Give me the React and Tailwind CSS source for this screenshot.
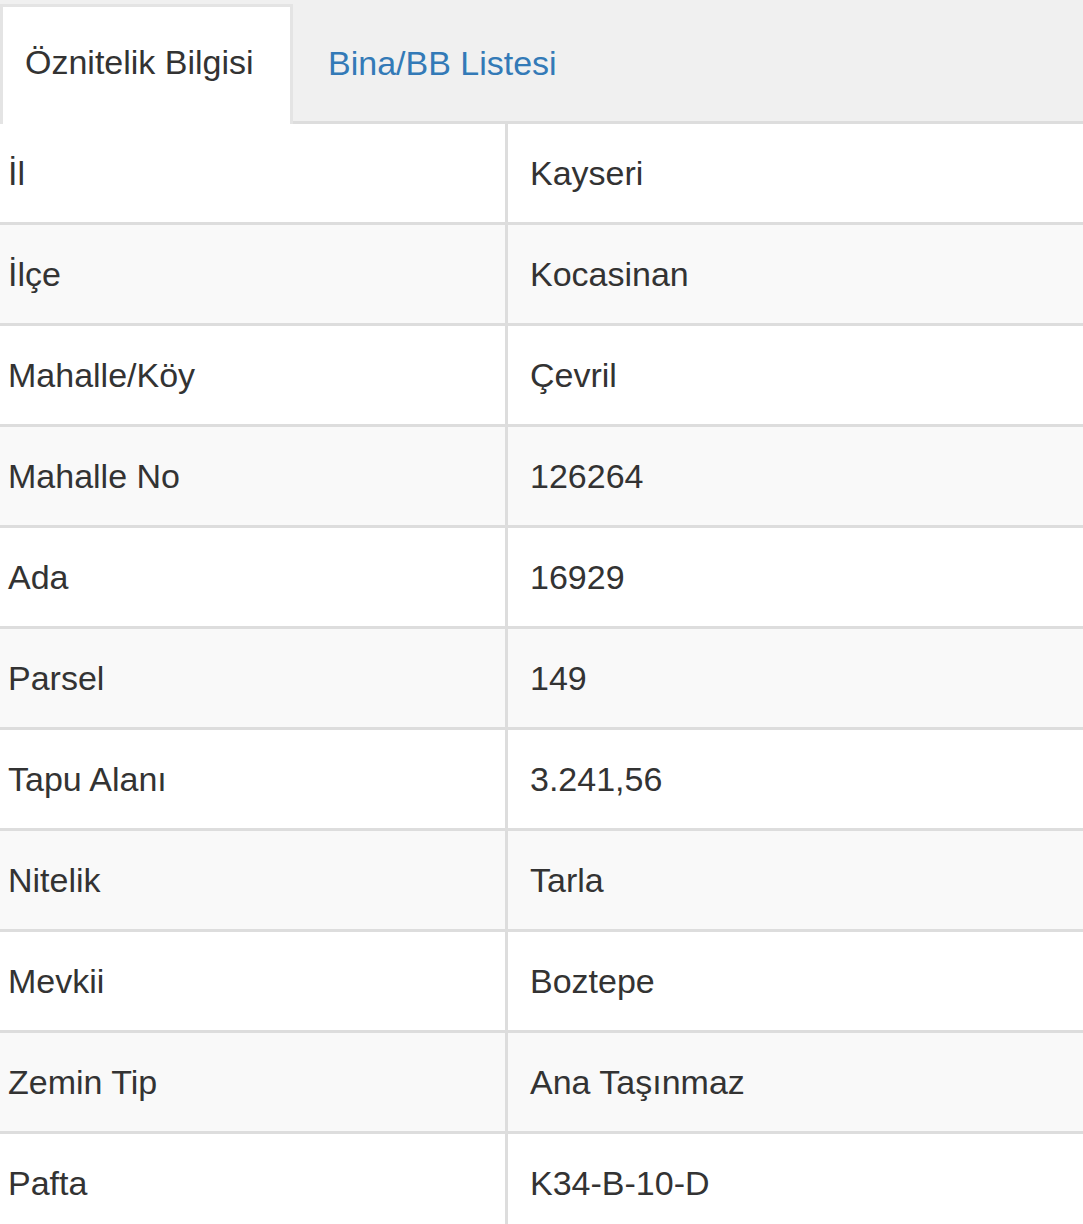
import React from "react";

const rows = [
  ["İl", "Kayseri"],
  ["İlçe", "Kocasinan"],
  ["Mahalle/Köy", "Çevril"],
  ["Mahalle No", "126264"],
  ["Ada", "16929"],
  ["Parsel", "149"],
  ["Tapu Alanı", "3.241,56"],
  ["Nitelik", "Tarla"],
  ["Mevkii", "Boztepe"],
  ["Zemin Tip", "Ana Taşınmaz"],
  ["Pafta", "K34-B-10-D"],
];

export default function App() {
  return (
    <div
      className="w-[1083px] h-[1224px] overflow-hidden bg-white text-[#333] text-[34px]"
      style={{ fontFamily: '"Liberation Sans", Arial, sans-serif' }}
    >
      <div className="h-[124px] bg-[#f0f0f0] border-b-[3px] border-[#ddd] flex items-end pt-[7px]">
        <div className="h-[120px] -mb-[3px] w-[293px] bg-white border-[3px] border-b-0 border-[#e4e4e4] flex items-center pl-[22px] pb-[6px]">
          Öznitelik Bilgisi
        </div>
        <div className="h-full flex items-center pl-[35px] pb-[2px] text-[#337ab7]">
          Bina/BB Listesi
        </div>
      </div>
      <div>
        {rows.map(([k, v], i) => (
          <div
            key={k}
            className={`flex h-[101px] border-b-[3px] border-[#ddd] ${
              i % 2 === 1 ? "bg-[#f9f9f9]" : "bg-white"
            }`}
          >
            <div className="w-[508px] flex items-center pl-[8px] border-r-[3px] border-[#ddd]">
              {k}
            </div>
            <div className="flex-1 flex items-center pl-[22px]">{v}</div>
          </div>
        ))}
      </div>
    </div>
  );
}
